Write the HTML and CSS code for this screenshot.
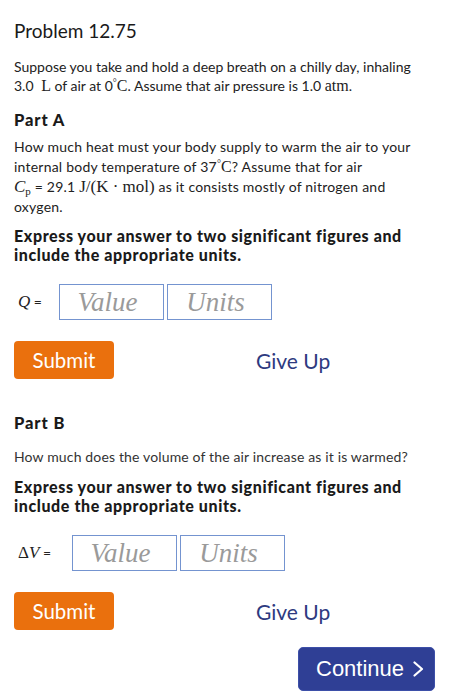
FILE: index.html
```html
<!DOCTYPE html>
<html lang="en">
<head>
<meta charset="utf-8">
<title>Problem 12.75</title>
<link rel="stylesheet" href="styles.css">
</head>
<body>
<main class="problem">
  <h1 class="problem-title">Problem 12.75</h1>
  <p class="intro">Suppose you take and hold a deep breath on a chilly day, inhaling<br>3.0 <span class="m">&nbsp;L</span> of air at 0<span class="m"><sup>&deg;</sup>C</span>. Assume that air pressure is 1.0 <span class="m">atm</span>.</p>

  <section class="part part-a">
    <h2 class="part-title">Part A</h2>
    <p class="question">How much heat must your body supply to warm the air to your<br>internal body temperature of 37<span class="m"><sup>&deg;</sup>C</span>? Assume that for air<br><span class="m big"><i>C</i><sub>p</sub></span> = 29.1 <span class="m big">J/(K &middot; mol)</span> as it consists mostly of nitrogen and<br>oxygen.</p>
    <p class="instructions">Express your answer to two significant figures and<br>include the appropriate units.</p>
    <div class="answer-row">
      <span class="var-label"><i class="m">Q</i> =</span>
      <div class="field"><span class="placeholder">Value</span></div>
      <div class="field"><span class="placeholder">Units</span></div>
    </div>
    <div class="actions">
      <button class="btn-submit" type="button">Submit</button>
      <a class="give-up" href="#">Give Up</a>
    </div>
  </section>

  <section class="part part-b">
    <h2 class="part-title">Part B</h2>
    <p class="question single">How much does the volume of the air increase as it is warmed?</p>
    <p class="instructions">Express your answer to two significant figures and<br>include the appropriate units.</p>
    <div class="answer-row">
      <span class="var-label"><span class="m">&Delta;<i>V</i></span> =</span>
      <div class="field"><span class="placeholder">Value</span></div>
      <div class="field"><span class="placeholder">Units</span></div>
    </div>
    <div class="actions">
      <button class="btn-submit" type="button">Submit</button>
      <a class="give-up" href="#">Give Up</a>
    </div>
  </section>

  <div class="footer">
    <button class="btn-continue" type="button">Continue <svg class="chev" width="11" height="16" viewBox="0 0 11 16"><path d="M1.5 1.5 L9 8 L1.5 14.5" fill="none" stroke="#fff" stroke-width="2.2" stroke-linecap="round" stroke-linejoin="round"/></svg></button>
  </div>
</main>
</body>
</html>
```

FILE: styles.css
```css
* { box-sizing: border-box; }

html, body {
  margin: 0;
  padding: 0;
  background: #fff;
}

body {
  font-family: Lato, "Open Sans", sans-serif;
  color: #222;
  font-size: 14px;
}

.problem {
  padding: 19px 16px 0 14px;
}

.problem-title {
  margin: 0;
  font-size: 19px;
  line-height: 24px;
  font-weight: 400;
  color: #1a1a1a;
}

p { margin: 0; }

.intro {
  margin-top: 14px;
  line-height: 19px;
}

/* inline math, set in a serif face */
.m {
  font-family: "Liberation Serif", "Times New Roman", serif;
  font-size: 16px;
  letter-spacing: 0;
}
.m sup {
  font-size: 10px;
  vertical-align: 5px;
  line-height: 0;
}
.m sub {
  font-size: 11px;
  vertical-align: -3px;
  line-height: 0;
  font-style: normal;
}
.m.big { font-size: 17px; }

.part-title {
  margin: 0;
  font-size: 16.5px;
  line-height: 19px;
  font-weight: 900;
  letter-spacing: 0.9px;
  color: #1a1a1a;
}
.part-a .part-title { margin-top: 16px; }
.part-b .part-title { margin-top: 35px; }

.question {
  margin-top: 7px;
  line-height: 20px;
  letter-spacing: 0.22px;
}
.question.single {
  margin-top: 14px;
  color: #333;
  letter-spacing: 0.15px;
}

.instructions {
  margin-top: 9px;
  font-size: 16px;
  line-height: 19px;
  font-weight: 900;
  letter-spacing: 0.6px;
  color: #1a1a1a;
}
.part-b .instructions { margin-top: 10px; }

.answer-row {
  display: flex;
  align-items: center;
  margin-top: 20px;
  height: 36px;
}

.var-label {
  display: inline-block;
  padding-left: 4px;
  font-size: 14px;
  color: #222;
}
.var-label .m { font-size: 17px; }
.part-a .var-label { width: 45px; }
.part-b .var-label { width: 58px; }

.field {
  width: 105px;
  height: 36px;
  border: 1px solid #7494d0;
  margin-right: 3px;
  display: flex;
  align-items: center;
  justify-content: center;
  padding-right: 8px;
}

.placeholder {
  font-family: "Liberation Serif", "Times New Roman", serif;
  font-style: italic;
  font-size: 27px;
  color: #9a9a9a;
}

.actions {
  display: flex;
  align-items: center;
  margin-top: 21px;
}

.btn-submit {
  width: 100px;
  height: 38px;
  border: none;
  border-radius: 4px;
  background: #ea700d;
  color: #fff;
  font-family: Lato, sans-serif;
  font-size: 20.5px;
  padding: 0;
}

.give-up {
  margin-left: 142px;
  font-size: 21px;
  color: #2e3a80;
  text-decoration: none;
}

.footer {
  display: flex;
  justify-content: flex-end;
  margin-top: 17px;
}

.btn-continue {
  width: 137px;
  height: 44px;
  border: 1px solid #3d4fa8;
  border-radius: 5px;
  background: #2f3f95;
  color: #fff;
  font-family: "Liberation Sans", Arial, sans-serif;
  font-size: 22px;
  padding: 0 0 0 17px;
  display: flex;
  align-items: center;
  justify-content: flex-start;
  gap: 9px;
}
.chev { display: block; }
```
